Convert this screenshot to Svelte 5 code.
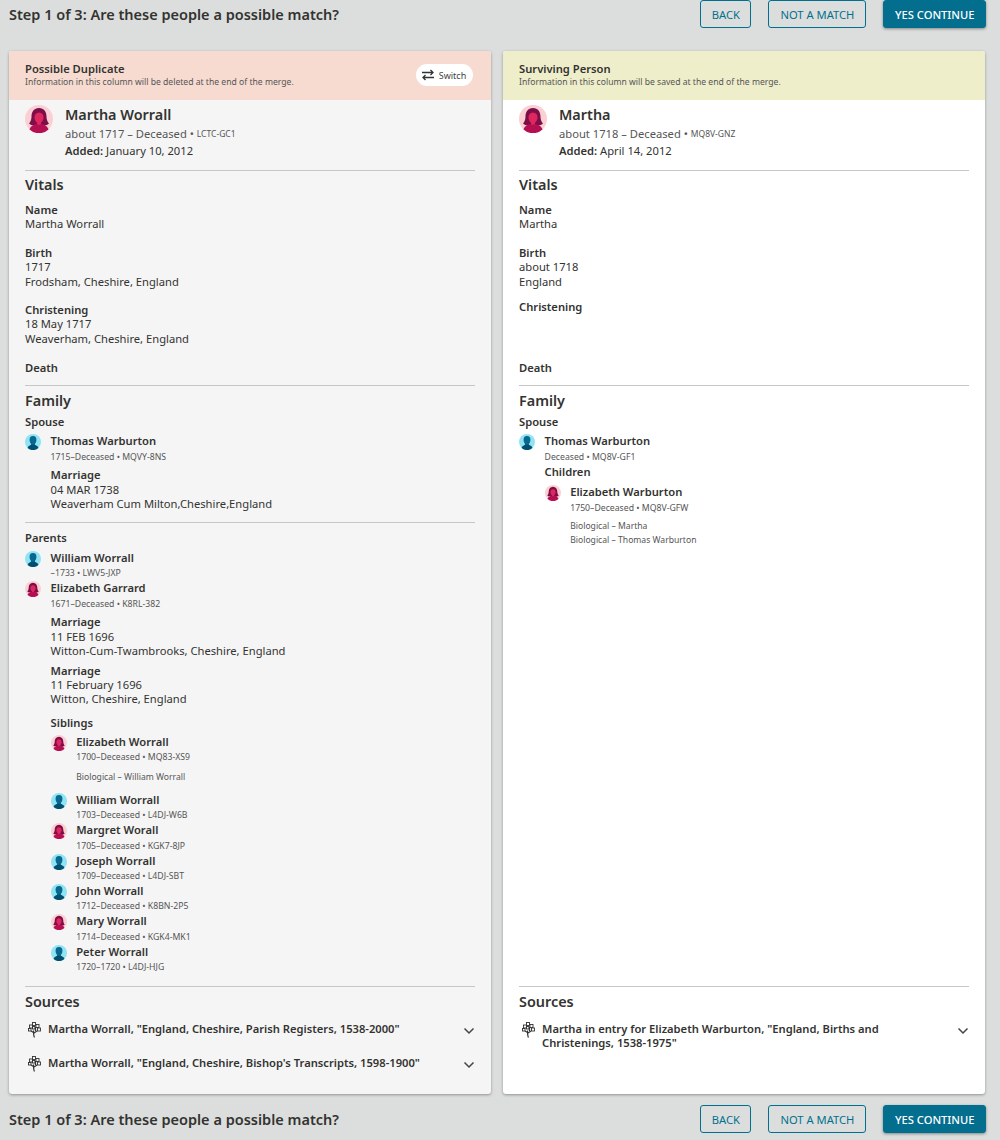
<script>
  const siblings = [
    { name: "William Worrall", sub: "1703–Deceased • L4DJ-W6B", sex: "m" },
    { name: "Margret Worall", sub: "1705–Deceased • KGK7-8JP", sex: "f" },
    { name: "Joseph Worrall", sub: "1709–Deceased • L4DJ-SBT", sex: "m" },
    { name: "John Worrall", sub: "1712–Deceased • K8BN-2P5", sex: "m" },
    { name: "Mary Worrall", sub: "1714–Deceased • KGK4-MK1", sex: "f" },
    { name: "Peter Worrall", sub: "1720–1720 • L4DJ-HJG", sex: "m" }
  ]
</script>

{#snippet avatar(sex, size)}
  <svg class="avatar" width={size} height={size} viewBox="0 0 28 28">
    {#if sex == "f"}
      <circle cx="14" cy="14" r="14" fill="#fbd0d4" />
      <path d="M14 3c-5 0-7.500 4-7.500 8.500 0 3-1 5.500-2.500 7 2 2 5 2.500 10 2.500s8-.5 10-2.500c-1.500-1.500-2.500-4-2.500-7C21.500 7 19 3 14 3z" fill="#7c0f48" />
      <path d="M14 7.500c-3 0-4.500 2.200-4.500 5 0 2.200 1 4 2.500 5.200v2.300h4v-2.300c1.500-1.200 2.500-3 2.500-5.200 0-2.800-1.500-5-4.500-5z" fill="#e0265f" />
      <path d="M4.500 24.500c1-3.500 4.500-5 7.500-5.500l2 1 2-1c3 .5 6.500 2 7.500 5.500a14 14 0 0 1-19 0z" fill="#b50f52" />
    {:else}
      <circle cx="14" cy="14" r="14" fill="#8fe3f2" />
      <path d="M14 3.500c-4.500 0-6 2.800-6 6.500 0 3 1 5.500 2.500 7.200V20h7v-2.800c1.500-1.700 2.500-4.200 2.500-7.200 0-3.700-1.500-6.500-6-6.500z" fill="#07698f" />
      <path d="M4.500 24.500c1-3.500 4.500-5 7.500-5.500h4c3 .5 6.500 2 7.500 5.500a14 14 0 0 1-19 0z" fill="#004f6e" />
    {/if}
  </svg>
{/snippet}

{#snippet person(name, sub, sex)}
  <div class="person">
    {@render avatar(sex, 16)}
    <div>
      <div class="person-name">{name}</div>
      <div class="sub">{sub}</div>
    </div>
  </div>
{/snippet}

{#snippet tree()}
  <svg class="tree" width="13" height="16" viewBox="0 0 13 16" fill="none" stroke="#333" stroke-width="0.900">
    <path d="M6.500 15.500C5.500 14 5.500 11 5.500 8.500M5.500 10.500 3 9M6 11l3-2M7.500 5v4" stroke-width="1.200" />
    <rect x="4.500" y="0.500" width="3" height="3" />
    <rect x="8" y="2.500" width="3" height="3" />
    <rect x="1.500" y="3" width="3" height="3" />
    <rect x="9.500" y="6" width="3" height="3" />
    <rect x="4.500" y="4.500" width="2.500" height="2.500" />
    <rect x="0.500" y="6.500" width="2.500" height="2.500" />
  </svg>
{/snippet}

{#snippet chevron()}
  <svg class="chev" width="12" height="8" viewBox="0 0 12 8" fill="none" stroke="#444" stroke-width="1.500">
    <path d="M1.500 1.500 6 6l4.500-4.500" />
  </svg>
{/snippet}

{#snippet bar()}
  <div class="bar">
    <h1>Step 1 of 3: Are these people a possible match?</h1>
    <div class="actions">
      <button class="btn">BACK</button>
      <button class="btn mid">NOT A MATCH</button>
      <button class="btn primary">YES CONTINUE</button>
    </div>
  </div>
{/snippet}

{#snippet head(name, life, id, added)}
  <div class="head">
    {@render avatar("f", 28)}
    <div>
      <div class="big-name">{name}</div>
      <div class="life">{life} • <span class="pid">{id}</span></div>
      <div class="added"><b>Added:</b> {added}</div>
    </div>
  </div>
{/snippet}

<div class="page">
  {@render bar()}

  <div class="columns">
    <div class="card dup">
      <div class="banner red">
        <div>
          <div class="banner-title">Possible Duplicate</div>
          <div class="banner-note">Information in this column will be deleted at the end of the merge.</div>
        </div>
        <button class="switch">
          <svg width="14" height="12" viewBox="0 0 14 12" fill="none" stroke="#333" stroke-width="1.300">
            <path d="M1 3.500h11M9.500 1 12 3.500 9.500 6M13 8.500H2M4.500 6 2 8.500 4.500 11" />
          </svg>
          Switch
        </button>
      </div>
      <div class="body">
        {@render head("Martha Worrall", "about 1717 – Deceased", "LCTC-GC1", "January 10, 2012")}
        <hr class="hr-vitals" />
        <h2>Vitals</h2>
        <div class="vitals">
          <div class="field"><b>Name</b><span>Martha Worrall</span></div>
          <div class="field"><b>Birth</b><span>1717</span><span>Frodsham, Cheshire, England</span></div>
          <div class="field full"><b>Christening</b><span>18 May 1717</span><span>Weaverham, Cheshire, England</span></div>
          <div class="field"><b>Death</b></div>
        </div>
        <hr class="hr-family" />
        <h2>Family</h2>
        <div class="label spouse-label">Spouse</div>
        {@render person("Thomas Warburton", "1715–Deceased • MQVY-8NS", "m")}
        <div class="indent event first"><b>Marriage</b><span>04 MAR 1738</span><span>Weaverham Cum Milton,Cheshire,England</span></div>
        <hr class="hr-parents" />
        <div class="label parents-label">Parents</div>
        {@render person("William Worrall", "–1733 • LWV5-JXP", "m")}
        {@render person("Elizabeth Garrard", "1671–Deceased • K8RL-382", "f")}
        <div class="indent event second"><b>Marriage</b><span>11 FEB 1696</span><span>Witton-Cum-Twambrooks, Cheshire, England</span></div>
        <div class="indent event third"><b>Marriage</b><span>11 February 1696</span><span>Witton, Cheshire, England</span></div>
        <div class="indent">
          <div class="label siblings-label">Siblings</div>
          {@render person("Elizabeth Worrall", "1700–Deceased • MQ83-XS9", "f")}
          <div class="relation rel-sib">Biological – William Worrall</div>
          {#each siblings as s}
            {@render person(s.name, s.sub, s.sex)}
          {/each}
        </div>
        <div class="foot">
          <hr class="hr-sources" />
          <h2>Sources</h2>
          <div class="source">
            {@render tree()}
            <span>Martha Worrall, "England, Cheshire, Parish Registers, 1538-2000"</span>
            {@render chevron()}
          </div>
          <div class="source">
            {@render tree()}
            <span>Martha Worrall, "England, Cheshire, Bishop's Transcripts, 1598-1900"</span>
            {@render chevron()}
          </div>
        </div>
      </div>
    </div>

    <div class="card surv">
      <div class="banner green">
        <div>
          <div class="banner-title">Surviving Person</div>
          <div class="banner-note">Information in this column will be saved at the end of the merge.</div>
        </div>
      </div>
      <div class="body">
        {@render head("Martha", "about 1718 – Deceased", "MQ8V-GNZ", "April 14, 2012")}
        <hr class="hr-vitals" />
        <h2>Vitals</h2>
        <div class="vitals">
          <div class="field"><b>Name</b><span>Martha</span></div>
          <div class="field"><b>Birth</b><span>about 1718</span><span>England</span></div>
          <div class="field empty"><b>Christening</b></div>
          <div class="field"><b>Death</b></div>
        </div>
        <hr class="hr-family" />
        <h2>Family</h2>
        <div class="label spouse-label">Spouse</div>
        {@render person("Thomas Warburton", "Deceased • MQ8V-GF1", "m")}
        <div class="indent">
          <div class="label children-label">Children</div>
          {@render person("Elizabeth Warburton", "1750–Deceased • MQ8V-GFW", "f")}
          <div class="relation rel-child">Biological – Martha</div>
          <div class="relation">Biological – Thomas Warburton</div>
        </div>
        <div class="foot">
          <hr class="hr-sources" />
          <h2>Sources</h2>
          <div class="source tall">
            {@render tree()}
            <span>Martha in entry for Elizabeth Warburton, "England, Births and Christenings, 1538-1975"</span>
            {@render chevron()}
          </div>
        </div>
      </div>
    </div>
  </div>

  {@render bar()}
</div>

<style>
  :global(body) {
    background: #dcdedd;
    font-family: "Noto Sans", sans-serif;
    color: #333331;
  }

  .page {
    width: 1000px;
    height: 1140px;
    box-sizing: border-box;
    padding: 0 14px 0 9px;
    overflow: hidden;
  }

  .bar {
    height: 28px;
    display: flex;
    align-items: center;
    justify-content: space-between;
  }

  .columns + .bar {
    margin-top: 11px;
  }

  h1 {
    margin: 0;
    font-size: 14.5px;
    font-weight: 600;
  }

  .actions {
    display: flex;
    gap: 17px;
  }

  .btn {
    height: 28px;
    padding: 0 10.5px;
    box-sizing: border-box;
    border: 1px solid #00708f;
    border-radius: 3px;
    background: transparent;
    color: #00708f;
    font: 400 11.2px "Noto Sans", sans-serif;
  }

  .btn.mid {
    padding: 0 11px;
  }

  .btn.primary {
    background: #046e8f;
    color: #fff;
    font-weight: 500;
    box-shadow: 0 1px 3px rgba(0, 0, 0, 0.4);
  }

  .columns {
    margin-top: 23px;
    display: grid;
    grid-template-columns: 482px 482px;
    gap: 12px;
    height: 1043px;
  }

  .card {
    display: flex;
    flex-direction: column;
    border-radius: 3px;
    box-shadow: 0 1px 3px rgba(0, 0, 0, 0.35);
  }

  .dup {
    background: #f5f5f5;
  }

  .surv {
    background: #fff;
  }

  .banner {
    height: 49px;
    box-sizing: border-box;
    padding: 11px 18px 0 16px;
    display: flex;
    justify-content: space-between;
    border-radius: 3px 3px 0 0;
  }

  .red {
    background: #f7dbd0;
  }

  .green {
    background: #eeeeca;
  }

  .banner-title {
    font-size: 11.2px;
    font-weight: 600;
    line-height: 14px;
  }

  .banner-note {
    font-size: 8.6px;
    line-height: 13px;
    color: #555;
  }

  .switch {
    height: 22px;
    margin-top: 2px;
    width: 57px;
    padding: 0 2px 0 0;
    border: 0;
    border-radius: 11px;
    background: #fff;
    display: flex;
    align-items: center;
    justify-content: center;
    gap: 4px;
    color: #444;
    font: 400 9px "Noto Sans", sans-serif;
  }

  .body {
    flex: 1;
    display: flex;
    flex-direction: column;
    padding: 5px 16px 0;
    min-height: 0;
  }

  .head {
    display: flex;
    gap: 12px;
    height: 65px;
  }

  .avatar {
    flex: none;
  }

  .big-name {
    font-size: 14.4px;
    font-weight: 600;
    line-height: 19px;
  }

  .life {
    font-size: 11.2px;
    line-height: 19px;
    height: 18px;
    color: #555;
  }

  .pid {
    font-size: 8.5px;
    position: relative;
    top: -1px;
  }

  .added {
    font-size: 11.2px;
    line-height: 17px;
  }

  b {
    font-weight: 600;
  }

  hr {
    width: 100%;
    margin: 0;
    border: 0;
    border-top: 1px solid #c6c6c6;
  }

  .hr-vitals {
    margin-bottom: 4px;
  }

  .hr-family {
    margin-bottom: 5px;
  }

  .hr-sources {
    margin-bottom: 5px;
  }

  h2 {
    margin: 0;
    font-size: 14.4px;
    font-weight: 600;
    line-height: 20px;
  }

  .vitals {
    height: 190px;
    padding-top: 8px;
    box-sizing: border-box;
  }

  .field {
    display: flex;
    flex-direction: column;
    font-size: 11.2px;
    line-height: 14.4px;
    margin-bottom: 14px;
  }

  .field.full {
    margin-bottom: 15px;
  }

  .field.empty {
    margin-top: -3px;
    height: 47px;
  }

  .label {
    font-size: 11.2px;
    font-weight: 600;
    line-height: 14px;
  }

  .spouse-label {
    margin-top: 4px;
    margin-bottom: 4px;
  }

  .person {
    display: flex;
    gap: 9.6px;
    height: 30.4px;
  }

  .person-name {
    font-size: 11.2px;
    font-weight: 600;
    line-height: 15px;
  }

  .sub {
    margin-top: 1.5px;
    font-size: 8.7px;
    line-height: 15px;
    color: #555;
  }

  .person .avatar {
    margin-top: 1px;
  }

  .indent {
    margin-left: 25.6px;
  }

  .event {
    display: flex;
    flex-direction: column;
    font-size: 11.2px;
    line-height: 14.4px;
  }

  .first {
    margin-top: 5px;
  }

  .hr-parents {
    margin-top: 10px;
  }

  .parents-label {
    margin-top: 8px;
    margin-bottom: 5px;
  }

  .second {
    margin-top: 5px;
  }

  .third {
    margin-top: 5px;
  }

  .siblings-label {
    margin-top: 9px;
    margin-bottom: 4px;
  }

  .relation {
    margin-left: 25.6px;
    font-size: 8.6px;
    line-height: 14px;
    color: #555;
  }

  .rel-sib {
    margin-top: 6px;
    margin-bottom: 7.5px;
  }

  .rel-child {
    margin-top: 4px;
  }

  .children-label {
    margin-top: 2px;
    margin-bottom: 5px;
  }

  .foot {
    margin-top: auto;
    height: 108px;
    flex: none;
  }

  .source {
    display: flex;
    align-items: flex-start;
    gap: 7px;
    height: 34px;
    font-size: 11.2px;
    font-weight: 600;
    line-height: 14.4px;
  }

  h2 + .source {
    margin-top: 10px;
  }

  .source span {
    flex: 1;
  }

  .source .tree {
    margin-left: 3px;
  }

  .source .chev {
    margin: 5px 0 0;
  }

  .tall span {
    padding-right: 40px;
  }
</style>
